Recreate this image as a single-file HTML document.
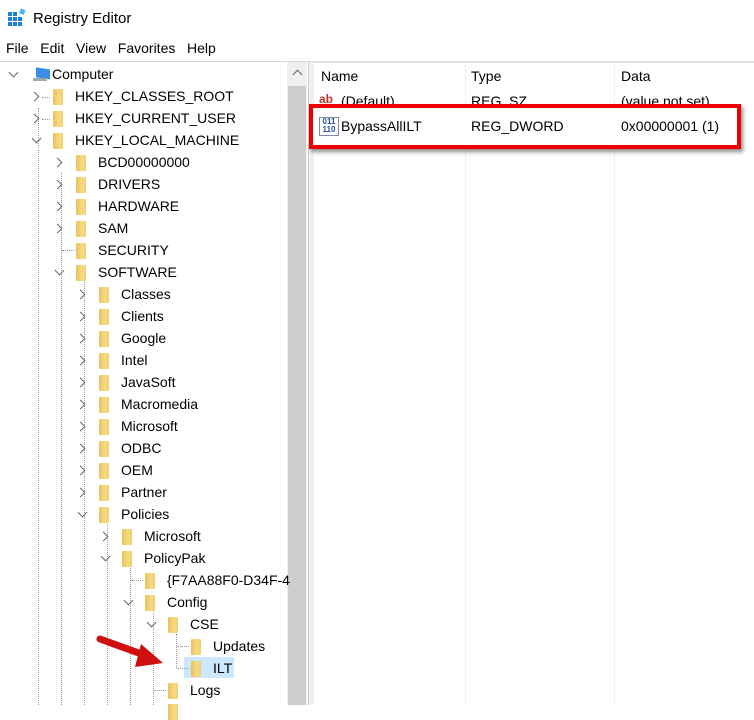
<!DOCTYPE html>
<html><head><meta charset="utf-8"><style>
body{margin:0;width:754px;height:705px;overflow:hidden;background:#fff;font-family:"Liberation Sans",sans-serif;font-size:14px;color:#000;position:relative}
.a{position:absolute;white-space:nowrap}
.f{position:absolute;width:10px;height:16px;background:linear-gradient(90deg,#e9c25a,#f6da86 60%,#f1cf6e);border-radius:1px}
.cv{position:absolute;width:6px;height:6px;border-right:1.5px solid #666;border-bottom:1.5px solid #666}
.r{transform:rotate(-45deg)}.d{transform:rotate(45deg)}
.dot{position:absolute;border-top:1px dotted #999}
.vd{position:absolute;border-left:1px dotted #999}
</style></head><body>
<div class="a" style="left:8px;top:8px;width:18px;height:18px">
<svg width="18" height="18"><g fill="#1e7fd6"><rect x="0" y="4" width="4" height="4"/><rect x="5" y="4" width="4" height="4"/><rect x="0" y="9" width="4" height="4"/><rect x="5" y="9" width="4" height="4"/><rect x="10" y="9" width="4" height="4"/><rect x="0" y="14" width="4" height="4"/><rect x="5" y="14" width="4" height="4"/><rect x="10" y="14" width="4" height="4"/></g><rect x="12" y="1" width="5" height="5" fill="#4fb4f0" transform="rotate(20 14 3)"/></svg></div>
<div class="a" style="left:33px;top:10px;font-size:15px">Registry Editor</div>
<div class="a" style="left:6px;top:40px">File&nbsp;&nbsp; Edit&nbsp;&nbsp; View&nbsp;&nbsp; Favorites&nbsp;&nbsp; Help</div>
<div class="a" style="left:0;top:61px;width:754px;height:1px;background:#d9d9d9"></div>
<div class="a" style="left:287px;top:62px;width:20px;height:643px;background:#f0f0f0"></div>
<div class="a" style="left:288px;top:86px;width:18px;height:619px;background:#cdcdcd"></div>
<div class="cv a" style="left:294px;top:71px;transform:rotate(-135deg);border-color:#606060"></div>
<div class="a" style="left:308px;top:62px;width:5px;height:643px;background:#f0f0f0;border-left:1px solid #ccc"></div>
<div class="a" style="left:313px;top:62px;width:441px;height:1px;background:#e5e5e5"></div>
<div class="a" style="left:465px;top:63px;width:1px;height:642px;background:#eee"></div>
<div class="a" style="left:614px;top:63px;width:1px;height:642px;background:#eee"></div>
<div class="a" style="left:321px;top:68px">Name</div>
<div class="a" style="left:471px;top:68px">Type</div>
<div class="a" style="left:621px;top:68px">Data</div>
<div class="a" style="left:319px;top:92px;color:#c0392b;font-size:12px;font-weight:bold">ab</div>
<div class="a" style="left:341px;top:93px">(Default)</div>
<div class="a" style="left:471px;top:93px">REG_SZ</div>
<div class="a" style="left:621px;top:93px">(value not set)</div>
<div class="a" style="left:309px;top:104px;width:424px;height:37px;border:4px solid #e00;box-shadow:2px 3px 4px rgba(0,0,0,.45);background:#fff"></div>
<div class="a" style="left:319px;top:117px;width:18px;height:17px;border:1px solid #7a8aa8;font-size:8px;line-height:8px;color:#2050a0;font-weight:bold;text-align:center">011<br>110</div>
<div class="a" style="left:341px;top:118px">BypassAllILT</div>
<div class="a" style="left:471px;top:118px">REG_DWORD</div>
<div class="a" style="left:621px;top:118px">0x00000001 (1)</div>
<div class="vd" style="left:38px;top:108px;height:40px"></div>
<div class="vd" style="left:38px;top:150px;height:555px"></div>
<div class="vd" style="left:61px;top:172px;height:533px"></div>
<div class="vd" style="left:84px;top:282px;height:423px"></div>
<div class="vd" style="left:107px;top:524px;height:181px"></div>
<div class="vd" style="left:130px;top:568px;height:137px"></div>
<div class="vd" style="left:153px;top:612px;height:93px"></div>
<div class="vd" style="left:176px;top:634px;height:34px"></div>
<div class="a" style="left:184px;top:657px;width:50px;height:21px;background:#cce8ff"></div>
<svg class="a" style="left:33px;top:66px" width="18" height="18"><rect x="3" y="1" width="14" height="10" fill="#3a8ee6" transform="skewY(8)"/><rect x="0" y="12" width="14" height="3" fill="#9aa"/></svg>
<div class="cv a d" style="left:10px;top:69px"></div>
<div class="a" style="left:52px;top:66px">Computer</div>
<div class="cv a r" style="left:31px;top:93px"></div><div class="dot" style="left:42px;top:97px;width:8px"></div><div class="f" style="left:53px;top:89px"></div><div class="a" style="left:75px;top:88px">HKEY_CLASSES_ROOT</div>
<div class="cv a r" style="left:31px;top:115px"></div><div class="dot" style="left:42px;top:119px;width:8px"></div><div class="f" style="left:53px;top:111px"></div><div class="a" style="left:75px;top:110px">HKEY_CURRENT_USER</div>
<div class="cv a d" style="left:33px;top:135px"></div><div class="f" style="left:53px;top:133px"></div><div class="a" style="left:75px;top:132px">HKEY_LOCAL_MACHINE</div>
<div class="cv a r" style="left:54px;top:159px"></div><div class="f" style="left:76px;top:155px"></div><div class="a" style="left:98px;top:154px">BCD00000000</div>
<div class="cv a r" style="left:54px;top:181px"></div><div class="f" style="left:76px;top:177px"></div><div class="a" style="left:98px;top:176px">DRIVERS</div>
<div class="cv a r" style="left:54px;top:203px"></div><div class="f" style="left:76px;top:199px"></div><div class="a" style="left:98px;top:198px">HARDWARE</div>
<div class="cv a r" style="left:54px;top:225px"></div><div class="f" style="left:76px;top:221px"></div><div class="a" style="left:98px;top:220px">SAM</div>
<div class="dot" style="left:62px;top:250px;width:12px"></div><div class="f" style="left:76px;top:243px"></div><div class="a" style="left:98px;top:242px">SECURITY</div>
<div class="cv a d" style="left:56px;top:267px"></div><div class="f" style="left:76px;top:265px"></div><div class="a" style="left:98px;top:264px">SOFTWARE</div>
<div class="cv a r" style="left:77px;top:291px"></div><div class="f" style="left:99px;top:287px"></div><div class="a" style="left:121px;top:286px">Classes</div>
<div class="cv a r" style="left:77px;top:313px"></div><div class="f" style="left:99px;top:309px"></div><div class="a" style="left:121px;top:308px">Clients</div>
<div class="cv a r" style="left:77px;top:335px"></div><div class="f" style="left:99px;top:331px"></div><div class="a" style="left:121px;top:330px">Google</div>
<div class="cv a r" style="left:77px;top:357px"></div><div class="f" style="left:99px;top:353px"></div><div class="a" style="left:121px;top:352px">Intel</div>
<div class="cv a r" style="left:77px;top:379px"></div><div class="f" style="left:99px;top:375px"></div><div class="a" style="left:121px;top:374px">JavaSoft</div>
<div class="cv a r" style="left:77px;top:401px"></div><div class="f" style="left:99px;top:397px"></div><div class="a" style="left:121px;top:396px">Macromedia</div>
<div class="cv a r" style="left:77px;top:423px"></div><div class="f" style="left:99px;top:419px"></div><div class="a" style="left:121px;top:418px">Microsoft</div>
<div class="cv a r" style="left:77px;top:445px"></div><div class="f" style="left:99px;top:441px"></div><div class="a" style="left:121px;top:440px">ODBC</div>
<div class="cv a r" style="left:77px;top:467px"></div><div class="f" style="left:99px;top:463px"></div><div class="a" style="left:121px;top:462px">OEM</div>
<div class="cv a r" style="left:77px;top:489px"></div><div class="f" style="left:99px;top:485px"></div><div class="a" style="left:121px;top:484px">Partner</div>
<div class="cv a d" style="left:79px;top:509px"></div><div class="f" style="left:99px;top:507px"></div><div class="a" style="left:121px;top:506px">Policies</div>
<div class="cv a r" style="left:100px;top:533px"></div><div class="f" style="left:122px;top:529px"></div><div class="a" style="left:144px;top:528px">Microsoft</div>
<div class="cv a d" style="left:102px;top:553px"></div><div class="f" style="left:122px;top:551px"></div><div class="a" style="left:144px;top:550px">PolicyPak</div>
<div class="dot" style="left:131px;top:580px;width:12px"></div><div class="f" style="left:145px;top:573px"></div><div class="a" style="left:167px;top:572px">{F7AA88F0-D34F-4</div>
<div class="cv a d" style="left:125px;top:597px"></div><div class="f" style="left:145px;top:595px"></div><div class="a" style="left:167px;top:594px">Config</div>
<div class="cv a d" style="left:148px;top:619px"></div><div class="f" style="left:168px;top:617px"></div><div class="a" style="left:190px;top:616px">CSE</div>
<div class="dot" style="left:177px;top:646px;width:12px"></div><div class="f" style="left:191px;top:639px"></div><div class="a" style="left:213px;top:638px">Updates</div>
<div class="dot" style="left:177px;top:668px;width:12px"></div><div class="f" style="left:191px;top:661px"></div><div class="a" style="left:213px;top:660px">ILT</div>
<div class="dot" style="left:154px;top:690px;width:12px"></div><div class="f" style="left:168px;top:683px"></div><div class="a" style="left:190px;top:682px">Logs</div>
<div class="f" style="left:168px;top:704px"></div>
<svg class="a" style="left:95px;top:630px" width="75" height="42"><path d="M5 9 L52 26" stroke="#d01010" stroke-width="7" stroke-linecap="round"/><path d="M46 14 L68 33 L40 37 Z" fill="#d01010"/></svg>
</body></html>
